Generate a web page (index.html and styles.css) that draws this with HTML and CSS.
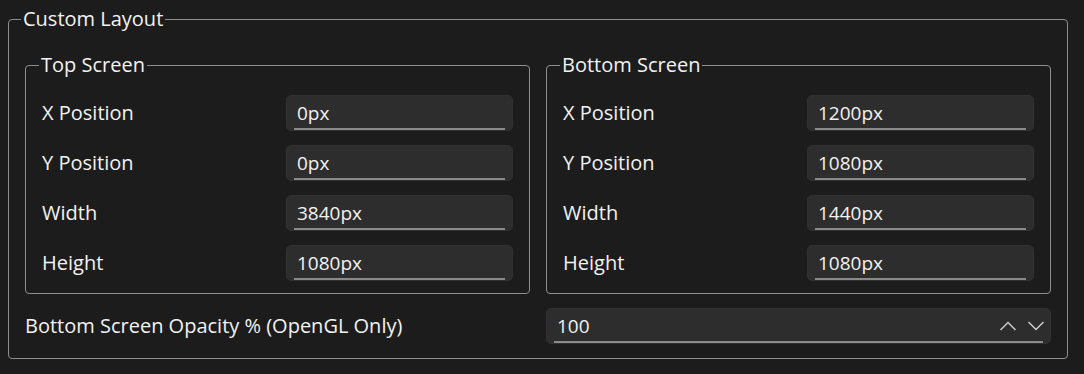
FILE: index.html
```html
<!DOCTYPE html>
<html lang="en">
<head>
  <meta charset="UTF-8">
  <title>Custom Layout</title>
  <link rel="stylesheet" href="styles.css">
</head>
<body>
  <fieldset class="group">
    <legend class="group-title">Custom Layout</legend>

    <div class="screens">
      <!-- Top screen -->
      <fieldset class="group sub">
        <legend class="group-title">Top Screen</legend>
        <div class="field-row">
          <label class="field-label">X Position</label>
          <div class="text-box">0px</div>
        </div>
        <div class="field-row">
          <label class="field-label">Y Position</label>
          <div class="text-box">0px</div>
        </div>
        <div class="field-row">
          <label class="field-label">Width</label>
          <div class="text-box">3840px</div>
        </div>
        <div class="field-row">
          <label class="field-label">Height</label>
          <div class="text-box">1080px</div>
        </div>
      </fieldset>

      <!-- Bottom screen -->
      <fieldset class="group sub">
        <legend class="group-title">Bottom Screen</legend>
        <div class="field-row">
          <label class="field-label">X Position</label>
          <div class="text-box">1200px</div>
        </div>
        <div class="field-row">
          <label class="field-label">Y Position</label>
          <div class="text-box">1080px</div>
        </div>
        <div class="field-row">
          <label class="field-label">Width</label>
          <div class="text-box">1440px</div>
        </div>
        <div class="field-row">
          <label class="field-label">Height</label>
          <div class="text-box">1080px</div>
        </div>
      </fieldset>
    </div>

    <div class="opacity-row">
      <label class="field-label">Bottom Screen Opacity % (OpenGL Only)</label>
      <div class="text-box spin-box">
        <span>100</span>
        <span class="spin-buttons">
          <svg width="18" height="10" viewBox="0 0 18 10"><path d="M1.5 9 L9 1.5 L16.5 9" fill="none" stroke="#d0d0d0" stroke-width="1.4"/></svg>
          <svg width="18" height="10" viewBox="0 0 18 10"><path d="M1.5 1 L9 8.5 L16.5 1" fill="none" stroke="#d0d0d0" stroke-width="1.4"/></svg>
        </span>
      </div>
    </div>
  </fieldset>
</body>
</html>
```

FILE: styles.css
```css
:root {
  --bg: #1c1c1c;
  --line: #8e8e8e;
  --box: #2d2d2d;
  --text: #f2f2f2;
}

* {
  box-sizing: border-box;
  font-family: 'Open Sans', 'Noto Sans', sans-serif;
}

body {
  margin: 0;
  background-color: var(--bg);
  color: var(--text);
  font-size: 20px;
}

.group {
  margin: 7px 16px 0 8px;
  padding: 22px 16px 14px;
  border: 1px solid var(--line);
  border-radius: 4px;
  min-width: 0;
}

.group-title {
  margin-left: -4px;
  padding: 0 2px;
  line-height: 24px;
  font-size: 20px;
}

.screens {
  display: grid;
  grid-template-columns: 1fr 1fr;
  gap: 16px;
}

.group.sub {
  margin: 0;
  padding: 18px 16px 12px;
  display: flex;
  flex-direction: column;
  gap: 14px;
}

.group.sub .group-title {
  margin-left: -3px;
}

.field-row {
  display: grid;
  grid-template-columns: 1fr 227px;
  align-items: center;
}

.field-label {
  line-height: 24px;
}

.text-box {
  height: 36px;
  padding: 0 10px;
  display: flex;
  align-items: center;
  font-size: 19px;
  border-radius: 5px;
  border: 1px solid #313131;
  background: linear-gradient(#8a8a8a, #8a8a8a) bottom center / calc(100% - 14px) 2px no-repeat, var(--box);
}

.opacity-row {
  margin-top: 14px;
  display: grid;
  grid-template-columns: 1fr 1fr;
  gap: 16px;
  align-items: center;
}

.spin-box {
  justify-content: space-between;
  padding-right: 5px;
}

.spin-buttons {
  display: flex;
  gap: 10px;
}
```
